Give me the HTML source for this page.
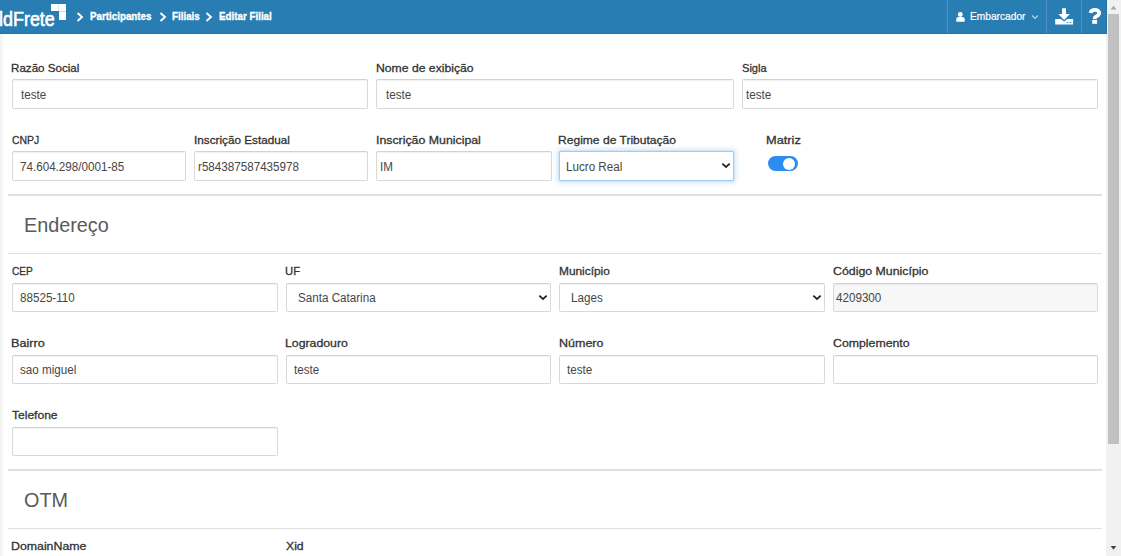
<!DOCTYPE html>
<html><head><meta charset="utf-8">
<style>
*{box-sizing:border-box;margin:0;padding:0}
html,body{width:1121px;height:556px;overflow:hidden;background:#fff;font-family:"Liberation Sans",sans-serif}
.abs{position:absolute}
#hdr{position:absolute;left:0;top:0;width:1107px;height:34px;background:#287db3;border-bottom:1px solid #2472a8;border-right:1px solid #2472a8;z-index:2}
.bc{position:absolute;top:9.5px;font-size:11px;font-weight:bold;color:#fff;-webkit-text-stroke:.35px #fff;line-height:12px;white-space:nowrap;transform:scaleX(.89);transform-origin:0 0}
.sep{position:absolute;top:0;width:1px;height:33px;background:#4d93c4}
#shadow{position:absolute;left:0;top:34px;width:5px;height:522px;background:linear-gradient(to right,#efefef,#f9f9f9 40%,#fff)}
.lbl{position:absolute;font-size:11.5px;color:#333;-webkit-text-stroke:.3px #333;line-height:12px;white-space:nowrap;transform:scaleX(1.0);transform-origin:0 0}
.inp{position:absolute;height:28px;border:1px solid #d9d9d9;border-top-color:#d2d2d2;border-radius:2px;background:#fff;box-shadow:inset 0 1px 1px rgba(0,0,0,.06)}
.inp span{position:absolute;top:8px;font-size:12px;color:#464646;line-height:13px;white-space:nowrap;transform:scaleX(.97);transform-origin:0 0}
.inp.dis{background:#f7f7f7}
.inp.focus{border-color:#a2cdf0;box-shadow:0 0 0 .5px #c4def4,0 0 5px 1.5px rgba(102,175,233,.3)}
.chev{position:absolute;right:2px;top:10px;width:10px;height:7px}
.hr{position:absolute;left:8px;width:1094px;background:#e0e0e0}
.h3{position:absolute;left:24px;font-size:20px;color:#5a5a5a;line-height:22px;white-space:nowrap;transform:scaleX(.99);transform-origin:0 0}
#sb{position:absolute;left:1106px;top:0;width:15px;height:556px;background:#f1f1f1}
#thumb{position:absolute;left:2px;top:14px;width:11px;height:430px;background:#c1c1c1}
</style></head><body>
<div id="hdr">
  <div class="abs" style="left:-1px;top:8px;font-size:19.5px;color:#fff;line-height:22px;-webkit-text-stroke:0.6px #fff;transform:scaleX(.92);transform-origin:0 0">ldFrete</div>
  <div class="abs" style="left:51px;top:4px;width:15px;height:7px;background:#fff"></div>
  <div class="abs" style="left:59px;top:11px;width:7px;height:8.5px;background:#fff"></div>
  <div class="abs" style="left:58px;top:4px;width:1px;height:7px;background:#dbe8f2"></div>
  <div class="abs" style="left:59px;top:11px;width:7px;height:0.6px;background:#c9dcec"></div>
  <svg class="abs" style="left:76px;top:12px" width="8" height="10" viewBox="0 0 8 10"><path d="M1.5 1 L6 5 L1.5 9" stroke="#fff" stroke-width="1.9" fill="none"/></svg>
  <div class="bc" style="left:89.5px">Participantes</div>
  <svg class="abs" style="left:159px;top:12px" width="8" height="10" viewBox="0 0 8 10"><path d="M1.5 1 L6 5 L1.5 9" stroke="#fff" stroke-width="1.9" fill="none"/></svg>
  <div class="bc" style="left:172px">Filiais</div>
  <svg class="abs" style="left:205px;top:12px" width="8" height="10" viewBox="0 0 8 10"><path d="M1.5 1 L6 5 L1.5 9" stroke="#fff" stroke-width="1.9" fill="none"/></svg>
  <div class="bc" style="left:219px">Editar Filial</div>

  <div class="sep" style="left:947px"></div>
  <div class="sep" style="left:1046px"></div>
  <div class="sep" style="left:1081px"></div>
  <svg class="abs" style="left:956px;top:12px" width="9" height="10" viewBox="0 0 9 10"><circle cx="4.3" cy="2.5" r="2.4" fill="#fff"/><path d="M0.3 9.8 L0.3 7.2 Q0.3 5.1 2.4 5.1 L6.3 5.1 Q8.7 5.1 8.7 7.2 L8.7 9.8 Z" fill="#fff"/></svg>
  <div class="abs" style="left:970px;top:10.8px;font-size:10.4px;color:#fff;line-height:12px;-webkit-text-stroke:.2px #fff;transform:scaleX(.98);transform-origin:0 0">Embarcador</div>
  <svg class="abs" style="left:1031px;top:13.6px" width="8" height="6" viewBox="0 0 8 6"><path d="M1.1 1.5 L4 4.4 L6.9 1.5" stroke="#b3d0e8" stroke-width="1.3" fill="none"/></svg>
  <svg class="abs" style="left:1054px;top:8px" width="20" height="17" viewBox="0 0 20 17"><path d="M8.1 0.3 H12 V5.9 H15.9 L10.1 12 L4.3 5.9 H8.1 Z" fill="#fff"/><path d="M1.2 10.9 H6.8 L10.1 13.6 L13.4 10.9 H19.1 V16.5 H1.2 Z" fill="#fff"/><rect x="12.9" y="14.1" width="1.7" height="0.9" fill="#3f8abd"/><rect x="15.7" y="14.1" width="1.7" height="0.9" fill="#3f8abd"/></svg>
  <svg class="abs" style="left:1088px;top:7px" width="14" height="18" viewBox="0 0 14 18"><path d="M2.6,6 C2.9,3.5 4.5,2.9 6.9,2.9 C9.5,2.9 11.2,4.2 11.2,6 C11.2,8 9.5,8.6 8.2,9.4 C7,10.1 6.65,10.6 6.65,12" stroke="#fff" stroke-width="3.8" fill="none"/><rect x="4.2" y="12.9" width="4.9" height="3.9" fill="#fff"/></svg>
</div>
<div id="shadow"></div>

<div class="lbl" style="left:11.39px;top:62px;transform:scaleX(1.009)">Razão Social</div>
<div class="inp " style="left:12px;top:79px;width:356px;height:30px"><span style="left:8px;top:9px">teste</span></div>
<div class="lbl" style="left:376.04px;top:62px;transform:scaleX(1.060)">Nome de exibição</div>
<div class="inp " style="left:376px;top:79px;width:357.5px;height:30px"><span style="left:9px;top:9px">teste</span></div>
<div class="lbl" style="left:742.00px;top:62px;transform:scaleX(0.965)">Sigla</div>
<div class="inp " style="left:742px;top:79px;width:356px;height:30px"><span style="left:3px;top:9px">teste</span></div>
<div class="lbl" style="left:12.40px;top:134px;transform:scaleX(0.907)">CNPJ</div>
<div class="inp " style="left:12px;top:151px;width:174px;height:30px"><span style="left:7.4px;top:9px">74.604.298/0001-85</span></div>
<div class="lbl" style="left:193.58px;top:134px;transform:scaleX(1.020)">Inscrição Estadual</div>
<div class="inp " style="left:194px;top:151px;width:174px;height:30px"><span style="left:3px;top:9px">r584387587435978</span></div>
<div class="lbl" style="left:375.93px;top:134px;transform:scaleX(1.072)">Inscrição Municipal</div>
<div class="inp " style="left:376px;top:151px;width:175.5px;height:30px"><span style="left:3px;top:9px">IM</span></div>
<div class="lbl" style="left:558.25px;top:134px;transform:scaleX(1.049)">Regime de Tributação</div>
<div class="inp focus" style="left:559px;top:151px;width:175px;height:30px"><span style="left:6px;top:9px">Lucro Real</span><svg class="chev" viewBox="0 0 10 7"><path d="M1.3 1.6 L5 5 L8.7 1.6" stroke="#222" stroke-width="1.7" fill="none"/></svg></div>
<div class="lbl" style="left:765.59px;top:134px;transform:scaleX(1.113)">Matriz</div>
<div class="abs" style="left:768px;top:156px;width:30px;height:15px;border-radius:8px;background:#2d8cf0"></div>
<div class="abs" style="left:783.3px;top:157.5px;width:12.2px;height:12.2px;border-radius:50%;background:#fff"></div>
<div class="hr" style="top:194px;height:2px"></div>
<div class="h3" style="top:214px">Endereço</div>
<div class="hr" style="top:253px;height:1px"></div>
<div class="lbl" style="left:12.00px;top:265px;transform:scaleX(0.883)">CEP</div>
<div class="inp " style="left:12px;top:283px;width:266px;height:29px"><span style="left:7.4px;top:8px">88525-110</span></div>
<div class="lbl" style="left:285.02px;top:265px;transform:scaleX(0.979)">UF</div>
<div class="inp " style="left:286px;top:283px;width:265px;height:29px"><span style="left:11px;top:8px">Santa Catarina</span><svg class="chev" viewBox="0 0 10 7"><path d="M1.3 1.6 L5 5 L8.7 1.6" stroke="#222" stroke-width="1.7" fill="none"/></svg></div>
<div class="lbl" style="left:558.97px;top:265px;transform:scaleX(1.031)">Município</div>
<div class="inp " style="left:559px;top:283px;width:266px;height:29px"><span style="left:11px;top:8px">Lages</span><svg class="chev" viewBox="0 0 10 7"><path d="M1.3 1.6 L5 5 L8.7 1.6" stroke="#222" stroke-width="1.7" fill="none"/></svg></div>
<div class="lbl" style="left:833.00px;top:265px;transform:scaleX(1.073)">Código Município</div>
<div class="inp dis" style="left:833px;top:283px;width:265px;height:29px"><span style="left:2px;top:8px">4209300</span></div>
<div class="lbl" style="left:10.90px;top:337px;transform:scaleX(1.103)">Bairro</div>
<div class="inp " style="left:12px;top:355px;width:266px;height:29px"><span style="left:7.4px;top:8px">sao miguel</span></div>
<div class="lbl" style="left:285.43px;top:337px;transform:scaleX(1.069)">Logradouro</div>
<div class="inp " style="left:286px;top:355px;width:265px;height:29px"><span style="left:7.4px;top:8px">teste</span></div>
<div class="lbl" style="left:558.91px;top:337px;transform:scaleX(1.087)">Número</div>
<div class="inp " style="left:559px;top:355px;width:266px;height:29px"><span style="left:7.4px;top:8px">teste</span></div>
<div class="lbl" style="left:833.00px;top:337px;transform:scaleX(1.070)">Complemento</div>
<div class="inp " style="left:833px;top:355px;width:265px;height:29px"></div>
<div class="lbl" style="left:12.00px;top:409px;transform:scaleX(1.047)">Telefone</div>
<div class="inp " style="left:12px;top:427px;width:266px;height:29px"></div>
<div class="hr" style="top:469px;height:2px"></div>
<div class="h3" style="top:489px">OTM</div>
<div class="hr" style="top:528px;height:1px"></div>
<div class="lbl" style="left:10.93px;top:540px;transform:scaleX(1.072)">DomainName</div>
<div class="lbl" style="left:286.00px;top:540px;transform:scaleX(1.062)">Xid</div>

<div id="sb">
  <div id="thumb"></div>
  <svg class="abs" style="left:4px;top:5px" width="7" height="5" viewBox="0 0 7 5"><path d="M0.6 4.6 L3.5 0.8 L6.4 4.6 Z" fill="#a3a3a3"/></svg>
  <svg class="abs" style="left:4px;top:545px" width="7" height="5" viewBox="0 0 7 5"><path d="M0.6 0.9 L3.5 4.8 L6.4 0.9 Z" fill="#474747"/></svg>
</div>
</body></html>
